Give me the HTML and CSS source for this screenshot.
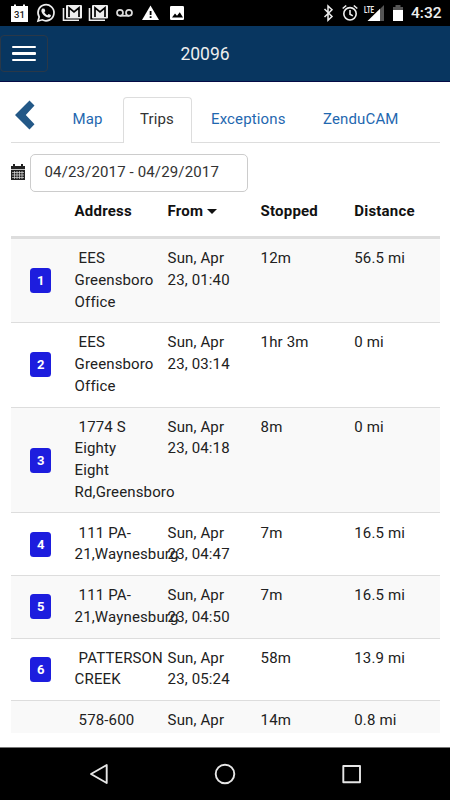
FILE: index.html
```html
<!DOCTYPE html>
<html lang="en">
<head>
<meta charset="utf-8">
<title>20096</title>
<link rel="stylesheet" href="styles.css">
</head>
<body>
<div class="statusbar">
  <svg class="notifications" width="190" height="26" viewBox="0 0 190 26" fill="#eee">
    <path d="M12 6h2V4.500h2V6h7V4.500h2V6h3v16H11V6z" fill="#fff"/>
    <text x="19.500" y="17.800" class="cal-day">31</text>
    <path d="M38 21l1.200-4a8 8 0 1 1 3 2.800z" fill="none" stroke="#eee" stroke-width="1.700"/>
    <path d="M42.500 8.500l2 .2.800 2.300-1 1.300c.8 1.500 1.800 2.300 3.100 2.900l1.200-1.200 2.300 1.100c.1 2-1.300 2.600-2.500 2.500-3.500-.5-6.500-3.600-7-6.300-.1-1.200.2-2.100 1.100-2.800z"/>
    <g id="mail">
      <path d="M63.500 8v12.300H79" fill="none" stroke="#eee" stroke-width="1.600"/>
      <rect x="66" y="5" width="16" height="13.500" rx="1"/>
      <path d="M69 17V7.800l5 4 5-4V17" fill="none" stroke="#000" stroke-width="1.700"/>
    </g>
    <use href="#mail" x="26"/>
    <g fill="none" stroke="#ddd" stroke-width="1.700"><circle cx="120" cy="12.800" r="3"/><circle cx="129" cy="12.800" r="3"/><path d="M120 15.800h9"/></g>
    <path d="M150.500 5.500L159 20h-17z" fill="#fff"/><path d="M149.700 11h1.800v4h-1.800zm0 5.300h1.800V18h-1.800z" fill="#000"/>
    <rect x="170" y="6" width="14" height="14" rx="1.300" fill="#fff"/><path d="M172 17.500l3-4 2 2.300 2.800-3.500 3.200 5.200z" fill="#000"/>
  </svg>
  <svg class="system" width="86" height="26" viewBox="320 0 86 26" fill="#eee">
    <path d="M324.500 9l7.500 7.500-4 3.800V6l4 3.800-7.500 7.200" fill="none" stroke="#eee" stroke-width="1.500"/>
    <g fill="none" stroke="#eee" stroke-width="1.600"><circle cx="350" cy="13.800" r="6.200"/><path d="M342.700 8.500l3.500-3M357.300 8.500l-3.500-3M350 10v4.200l2.800 1.700"/></g>
    <path d="M384 5v16h-4V9z" fill="#555"/><path d="M380 8.800V21h-12.500z" fill="#fff"/>
    <text x="364" y="12.500" class="lte" textLength="10" lengthAdjust="spacingAndGlyphs">LTE</text>
    <path d="M393 7h2.500V5h5v2h2.500v3.500h-10z" fill="#555"/><path d="M393 10h10v11h-10z" fill="#fff"/>
  </svg>
  <span class="clock">4:32</span>
</div>
<header class="appbar">
  <button class="menu" aria-label="Menu"><i></i><i></i><i></i></button>
  <h1>20096</h1>
</header>
<main>
  <nav class="tabs">
    <svg class="back" width="20" height="30" viewBox="0 0 20 30"><path d="M14.500.500L19.500 5.600 10.800 15l8.700 9.200-5 5.200L0 15z" fill="#235887"/></svg>
    <a class="tab">Map</a><a class="tab active">Trips</a><a class="tab">Exceptions</a><a class="tab">ZenduCAM</a>
  </nav>
  <div class="range">
    <svg width="14" height="16" viewBox="0 0 14 16"><path d="M0 2h2V0h2v2h6V0h2v2h2v3.200H0zM0 6h14v10H0z" fill="#222"/><path d="M1 8.500h12M1 11h12M1 13.500h12M3.500 7v8M6 7v8M8.500 7v8M11 7v8" stroke="#ddd" stroke-width=".7"/></svg>
    <div class="input">04/23/2017 - 04/29/2017</div>
  </div>
  <section class="trips">
    <div class="row head"><span></span><span>Address</span><span>From<b class="caret"></b></span><span>Stopped</span><span>Distance</span></div>
    <div class="row"><span class="num"><b>1</b></span><span class="addr">EES<br>Greensboro<br>Office</span><span>Sun, Apr<br>23, 01:40</span><span>12m</span><span>56.5 mi</span></div>
    <div class="row"><span class="num"><b>2</b></span><span class="addr">EES<br>Greensboro<br>Office</span><span>Sun, Apr<br>23, 03:14</span><span>1hr 3m</span><span>0 mi</span></div>
    <div class="row"><span class="num"><b>3</b></span><span class="addr">1774 S<br>Eighty<br>Eight<br>Rd,Greensboro</span><span>Sun, Apr<br>23, 04:18</span><span>8m</span><span>0 mi</span></div>
    <div class="row"><span class="num"><b>4</b></span><span class="addr">111 PA-<br>21,Waynesburg</span><span>Sun, Apr<br>23, 04:47</span><span>7m</span><span>16.5 mi</span></div>
    <div class="row"><span class="num"><b>5</b></span><span class="addr">111 PA-<br>21,Waynesburg</span><span>Sun, Apr<br>23, 04:50</span><span>7m</span><span>16.5 mi</span></div>
    <div class="row"><span class="num"><b>6</b></span><span class="addr">PATTERSON<br>CREEK</span><span>Sun, Apr<br>23, 05:24</span><span>58m</span><span>13.9 mi</span></div>
    <div class="row"><span></span><span class="addr">578-600</span><span>Sun, Apr</span><span>14m</span><span>0.8 mi</span></div>
  </section>
</main>
<footer class="navbar">
  <svg width="450" height="52" viewBox="0 0 450 52" fill="none" stroke="#e6e6e6" stroke-width="1.900" stroke-linejoin="round">
    <path d="M91 26l15.700-9v18z"/><circle cx="225" cy="26" r="9.300"/><rect x="343.300" y="18" width="16.700" height="16.300"/>
  </svg>
</footer>
</body>
</html>
```
FILE: styles.css
```css
* { box-sizing: border-box; }
body {
  margin: 0;
  width: 450px;
  height: 800px;
  overflow: hidden;
  display: flex;
  flex-direction: column;
  background: #fff;
  color: #212121;
  font: 15px/21.67px Roboto, sans-serif;
  letter-spacing: .14px;
}
svg { display: block; flex: none; }
.statusbar {
  height: 26px;
  flex: none;
  display: flex;
  align-items: center;
  background: #000;
}
.system { margin-left: 130px; }
.clock { margin-left: 5px; padding-top: 2px; color: #eee; font-size: 15.500px; font-weight: 500; letter-spacing: 0; }
.cal-day { font-size: 9.500px; font-weight: 500; letter-spacing: 0; fill: #222; text-anchor: middle; }
.lte { font-size: 8.500px; font-weight: 700; letter-spacing: 0; }
.appbar {
  height: 56px;
  flex: none;
  display: flex;
  align-items: center;
  background: #083660;
  border-bottom: 1px solid #060b45;
}
.menu {
  width: 48px;
  height: 37px;
  padding: 0 11px;
  display: flex;
  flex-direction: column;
  justify-content: center;
  gap: 4.500px;
  background: none;
  border: 1px solid #2a3848;
  border-radius: 4px;
}
.menu i { height: 2.200px; background: #fff; border-radius: 1px; }
.appbar h1 {
  flex: 1;
  margin: 2px 88px 0 0;
  text-align: center;
  color: #eee;
  font-size: 17.500px;
  font-weight: 400;
  letter-spacing: 0;
}
main { height: 665px; flex: none; padding: 15px 10px 14px 11px; display: flex; flex-direction: column; }
.tabs { height: 46px; flex: none; display: flex; border-bottom: 1px solid #ddd; }
.back { margin: 3px 26px 0 4px; }
.tab {
  height: 46px;
  padding: 12px 16px 0;
  margin-right: 2px;
  color: #1f68b0;
  white-space: nowrap;
}
.tab:nth-of-type(1) { padding: 12px 9px 0 11.400px; width: 60px; }
.tab.active { width: 69px; color: #333; background: #fff; border: 1px solid #ddd; border-bottom: 0; border-radius: 4px 4px 0 0; padding-top: 11px; margin-right: 3px; }
.tab:nth-of-type(3) { width: 110px; }
.range { margin-top: 11px; height: 38px; flex: none; display: flex; align-items: center; }
.range svg { margin: -2px 4.500px 0 0; }
.input {
  width: 218.500px;
  height: 38px;
  padding: 7px 14px;
  color: #333;
  border: 1px solid #ccc;
  border-radius: 5px;
  white-space: nowrap;
}
.trips { margin-top: 8px; flex: 1; min-height: 0; overflow: hidden; }
.row {
  display: grid;
  grid-template-columns: 54.300px 93px 93px 93.700px 1fr;
  padding: 9.200px 0 9.050px;
  border-top: 1px solid #ddd;
}
.row > span { padding-left: 9.300px; white-space: nowrap; }
.row:nth-child(even) { background: #f9f9f9; }
.row.head { height: 36px; padding: .5px 0 0; border: 0; font-weight: 700; color: #111; letter-spacing: .2px; }
.head + .row { border-top: 3px solid #ddd; }
.addr::first-letter { margin-left: 4px; }
.row > .num { display: flex; align-items: center; padding-left: 19.300px; }
.num b {
  width: 21px;
  height: 25px;
  border-radius: 3.500px;
  background: #1d1dde;
  color: #fff;
  font-size: 13px;
  line-height: 25px;
  text-align: center;
  letter-spacing: 0;
}
.caret { display: inline-block; margin-left: 4px; vertical-align: 2px; border: 5px solid transparent; border-top-color: #111; border-bottom: 0; }
.navbar { height: 53px; flex: none; background: #000; border-top: 1px solid #777; }
```
